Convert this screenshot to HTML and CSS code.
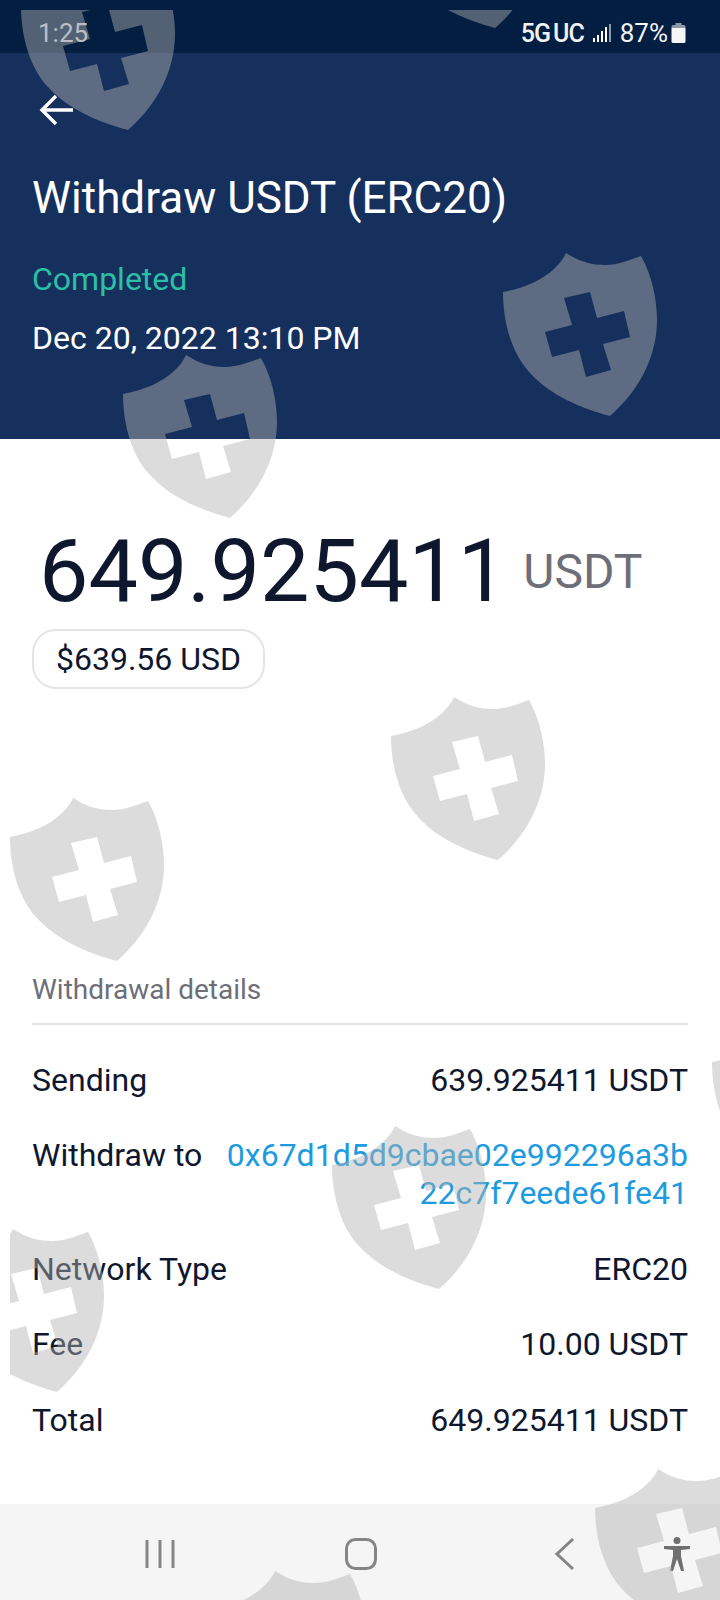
FILE: index.html
```html
<!DOCTYPE html>
<html lang="en">
<head>
  <meta charset="UTF-8" />
  <title>Withdraw USDT (ERC20)</title>
  <link rel="stylesheet" href="styles.css">
</head>
<body>
  <div class="phone">

    <!-- Status bar -->
    <div class="status">
      <span class="time">1:25</span>
      <div class="status-right">
        <span class="net">5G</span>
        <span class="net uc">UC</span>
        <svg class="signal" width="18" height="18" viewBox="0 0 18 18">
          <rect x="0" y="14" width="2" height="4" fill="#fff"/>
          <rect x="4" y="11" width="2" height="7" fill="#fff"/>
          <rect x="8" y="7" width="2" height="11" fill="#fff"/>
          <rect x="12" y="3" width="2" height="15" fill="#fff"/>
          <rect x="16" y="0" width="2" height="18" fill="#8c97a8"/>
        </svg>
        <span class="pct">87%</span>
        <svg class="battery" width="15" height="20" viewBox="0 0 15 20">
          <path d="M4.500 0h6v2h-6z" fill="#8c97a8"/>
          <path d="M2 2h11a1.500 1.500 0 0 1 1.500 1.500V5H.5V3.500A1.500 1.500 0 0 1 2 2z" fill="#8c97a8"/>
          <path d="M.5 5h14v13.500a1.500 1.500 0 0 1-1.500 1.500H2a1.500 1.500 0 0 1-1.500-1.500z" fill="#f4f5f7"/>
        </svg>
      </div>
    </div>

    <!-- Header -->
    <div class="header">
      <svg class="back" width="36" height="34" viewBox="0 0 36 34">
        <path d="M34 17H4M17 3L3 17l14 14" fill="none" stroke="#fff" stroke-width="3.400"/>
      </svg>
      <h1>Withdraw USDT (ERC20)</h1>
      <p class="state">Completed</p>
      <p class="date">Dec 20, 2022 13:10 PM</p>
    </div>

    <!-- Amount -->
    <div class="content">
      <div class="amount">
        <span class="value">649.925411</span>
        <span class="unit">USDT</span>
      </div>
      <div class="pill">$639.56 USD</div>

      <div class="details-title">Withdrawal details</div>
      <div class="row">
        <span>Sending</span>
        <span>639.925411 USDT</span>
      </div>
      <div class="row">
        <span>Withdraw to</span>
        <span class="link">0x67d1d5d9cbae02e992296a3b<br>22c7f7eede61fe41</span>
      </div>
      <div class="row">
        <span>Network Type</span>
        <span>ERC20</span>
      </div>
      <div class="row">
        <span>Fee</span>
        <span>10.00 USDT</span>
      </div>
      <div class="row">
        <span>Total</span>
        <span>649.925411 USDT</span>
      </div>
    </div>

    <!-- Nav bar -->
    <div class="navbar">
      <svg class="nav-recent" width="30" height="30" viewBox="0 0 30 30">
        <path d="M2 1v28M15 1v28M28 1v28" stroke="#858585" stroke-width="3" fill="none"/>
      </svg>
      <svg class="nav-home" width="32" height="32" viewBox="0 0 32 32">
        <rect x="1.500" y="1.500" width="29" height="29" rx="9" stroke="#858585" stroke-width="3" fill="none"/>
      </svg>
      <svg class="nav-back" width="20" height="34" viewBox="0 0 20 34">
        <path d="M18 2L2 17l16 15" stroke="#858585" stroke-width="3" fill="none"/>
      </svg>
      <svg class="nav-access" width="28" height="34" viewBox="0 0 28 34">
        <circle cx="14" cy="3.500" r="3.500" fill="#6f6f6f"/>
        <path d="M1 9h26v3l-9 1v6l3 15h-3l-4-12-4 12H7l3-15v-6l-9-1z" fill="#6f6f6f"/>
      </svg>
    </div>

    <!-- Watermark shields, on top of everything -->
    <svg class="watermark" width="710" height="1590" viewBox="10 10 710 1590">
      <defs>
        <path id="shield" fill-rule="evenodd" d="M23 62C45 58 62 50 74 39C80 33 84 28 86 23C100 32 112 35 125 35C138 35 150 30 161 26C172 45 177 70 177 90C177 125 160 160 130 186C100 178 70 165 50 143C33 125 23 95 23 62ZM84 68L110 62L117 88L144 81L150 107L123 114L131 140L106 147L99 120L72 127L65 102L92 95Z"/>
      </defs>
      <g fill="#b2b2b2" fill-opacity="0.455">
        <use href="#shield" x="-2" y="-56"/>
        <use href="#shield" x="365" y="-158"/>
        <use href="#shield" x="480" y="230"/>
        <use href="#shield" x="100" y="332"/>
        <use href="#shield" x="368" y="674"/>
        <use href="#shield" x="-13" y="775"/>
        <use href="#shield" x="689" y="1000"/>
        <use href="#shield" x="309" y="1103"/>
        <use href="#shield" x="-73" y="1206"/>
        <use href="#shield" x="572" y="1446"/>
        <use href="#shield" x="189" y="1548"/>
      </g>
    </svg>
  </div>
</body>
</html>
```

FILE: styles.css
```css
* {
  margin: 0; padding: 0;
  box-sizing: border-box;
}
body {
  background-color: white;
  font-family: Roboto, "Liberation Sans", sans-serif;
}
.phone {
  position: relative;
  width: 720px;
  height: 1600px;
  overflow: hidden;
  display: flex;
  flex-direction: column;
}
.status {
  height: 53px;
  background-color: #031e41;
  color: #f2f3f5;
  display: flex;
  justify-content: space-between;
  align-items: center;
  padding: 13px 34px 0 38px;
}
.time {
  font-size: 26px;
  color: #c4c9d2;
}
.status-right {
  display: flex;
  align-items: center;
}
.net {
  font-size: 25px;
  font-weight: 500;
  letter-spacing: -1px;
}
.uc {
  margin-left: 3px;
}
.signal {
  margin-left: 9px;
}
.pct {
  font-size: 26px;
  margin-left: 9px;
}
.battery {
  margin-left: 3px;
}
.header {
  height: 386px;
  background-color: #16305d;
  color: white;
  padding: 40px 32px 0;
}
.back {
  display: block;
  margin-left: 7px;
}
.header h1 {
  font-size: 44px;
  font-weight: 400;
  line-height: 48px;
  margin-top: 47px;
}
.state {
  font-size: 32px;
  line-height: 38px;
  color: #2bbfa6;
  margin-top: 38px;
}
.date {
  font-size: 32px;
  line-height: 38px;
  margin-top: 21px;
}
.content {
  flex: 1;
  padding: 0 32px;
  color: #0e172e;
}
.amount {
  display: flex;
  align-items: center;
  margin-top: 80px;
  padding-left: 7px;
}
.value {
  font-size: 88px;
  line-height: 104px;
}
.unit {
  font-size: 48px;
  color: #6d6f78;
  margin-left: 16px;
}
.pill {
  width: 233px;
  height: 60px;
  border: 2px solid #e4e4e6;
  border-radius: 24px;
  font-size: 32px;
  display: flex;
  align-items: center;
  justify-content: center;
  margin-top: 6px;
}
.details-title {
  font-size: 28px;
  line-height: 34px;
  color: #6d6f78;
  margin-top: 284px;
  padding-bottom: 16px;
  border-bottom: 2px solid #e1e3e6;
  margin-bottom: 17px;
}
.row {
  display: flex;
  justify-content: space-between;
  font-size: 32px;
  line-height: 38px;
  padding: 18.75px 0;
}
.row span:last-child {
  text-align: right;
}
.link {
  color: #1d9be0;
}
.navbar {
  height: 96px;
  flex-shrink: 0;
  background-color: #f5f5f5;
  display: flex;
  align-items: center;
  padding-top: 4px;
  position: relative;
}
.nav-recent {
  margin-left: 145px;
}
.nav-home {
  margin-left: 170px;
}
.nav-back {
  margin-left: 178px;
}
.nav-access {
  margin-left: 88px;
}
.watermark {
  position: absolute;
  left: 10px;
  top: 10px;
  pointer-events: none;
}
```
